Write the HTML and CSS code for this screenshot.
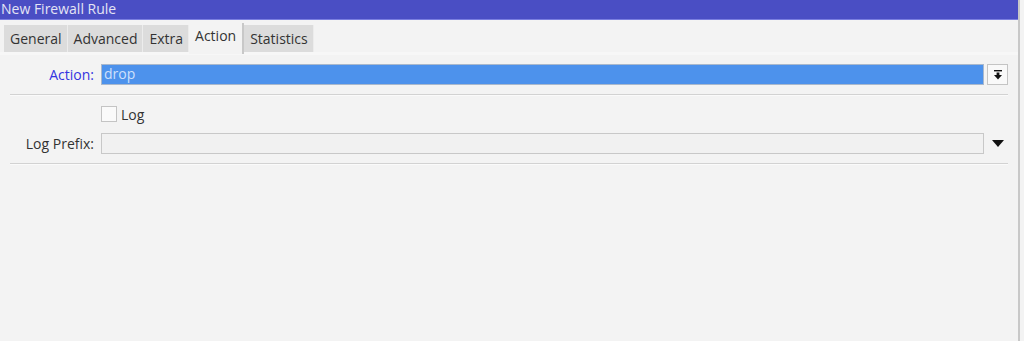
FILE: index.html
```html
<!DOCTYPE html>
<html lang="en">
<head>
    <meta charset="UTF-8">
    <title>New Firewall Rule</title>
    <link rel="stylesheet" href="styles.css">
</head>
<body>
    <div class="window">
        <div class="titlebar">New Firewall Rule</div>

        <div class="tabs">
            <div class="tab">General</div>
            <div class="tab">Advanced</div>
            <div class="tab">Extra</div>
            <div class="tab tab-active">Action</div>
            <div class="tab">Statistics</div>
        </div>

        <div class="panel">
            <div class="row row-action">
                <label class="row-label label-blue">Action:</label>
                <div class="field field-selected">drop</div>
                <button class="combo-btn">
                    <svg width="10" height="10" viewBox="0 0 10 10">
                        <rect x="1" y="0" width="8" height="1.4" fill="#111"/>
                        <rect x="3.6" y="2.5" width="2.8" height="3" fill="#111"/>
                        <polygon points="1,5 9,5 5,9.5" fill="#111"/>
                    </svg>
                </button>
            </div>

            <div class="sep"></div>

            <div class="row row-check">
                <span class="row-label"></span>
                <span class="checkbox"></span>
                <span class="check-text">Log</span>
            </div>

            <div class="row row-prefix">
                <label class="row-label">Log Prefix:</label>
                <div class="field"></div>
                <span class="arrow-btn">
                    <svg width="12" height="7" viewBox="0 0 12 7">
                        <polygon points="0,0 12,0 6,7" fill="#111"/>
                    </svg>
                </span>
            </div>

            <div class="sep"></div>
        </div>
    </div>
</body>
</html>
```

FILE: styles.css
```css
html, body {
    margin: 0;
    height: 100%;
    background: #f3f3f3;
    font-family: "Open Sans", "DejaVu Sans", sans-serif;
    font-size: 14px;
    color: #2a2a2a;
}

.window {
    width: 1020px;
    height: 100%;
    border-right: 2px solid #c8c8c8;
    box-sizing: border-box;
    background: #f3f3f3;
}

.titlebar {
    height: 20px;
    line-height: 18px;
    background: #4a4ec4;
    border-bottom: 1px solid #7a7ee0;
    box-sizing: border-box;
    color: #e4e4f4;
    padding-left: 1px;
}

.tabs {
    display: flex;
    align-items: flex-end;
    padding-left: 4px;
    height: 32px;
    box-sizing: border-box;
}

.tab {
    height: 27px;
    line-height: 27px;
    padding: 0 5px 0 6px;
    background: #dcdcdc;
    border-right: 1px solid #ececec;
    color: #333;
}

.tab-active {
    height: 31px;
    line-height: 26px;
    background: #f3f3f3;
    border-right: 2px solid #c8c8c8;
    padding: 0 6px 0 6px;
    margin-bottom: -2px;
}

.panel {
    border-top: 3px solid #f7f7f7;
    padding-top: 9px;
}

.row {
    display: flex;
    align-items: center;
    padding-right: 10px;
}

.row-label {
    width: 94px;
    flex: none;
    text-align: right;
    margin-right: 7px;
    color: #333;
}

.label-blue {
    color: #3434e0;
}

.field {
    flex: 1;
    height: 21px;
    box-sizing: border-box;
    border: 1px solid #c8c8c8;
    background: #f1f1f1;
    line-height: 18px;
    padding-left: 2px;
}

.field-selected {
    background: #4d92ec;
    border-color: #a9b8cc;
    color: #cfe0fb;
}

.combo-btn {
    width: 21px;
    height: 21px;
    margin-left: 3px;
    padding: 0;
    border: 1px solid #c4c4c4;
    background: #f9f9f9;
    display: flex;
    align-items: center;
    justify-content: center;
}

.arrow-btn {
    width: 21px;
    height: 21px;
    margin-left: 3px;
    display: flex;
    align-items: center;
    justify-content: center;
}

.sep {
    margin: 9px 10px 0 10px;
    height: 1px;
    background: #d2d2d2;
    border-bottom: 1px solid #fafafa;
}

.row-action {
    height: 21px;
}

.row-check {
    margin-top: 10px;
    height: 16px;
}

.checkbox {
    width: 14px;
    height: 14px;
    border: 1px solid #c4c4c4;
    background: #fafafa;
}

.check-text {
    margin-left: 4px;
    color: #333;
}

.row-prefix {
    margin-top: 11px;
}
```
